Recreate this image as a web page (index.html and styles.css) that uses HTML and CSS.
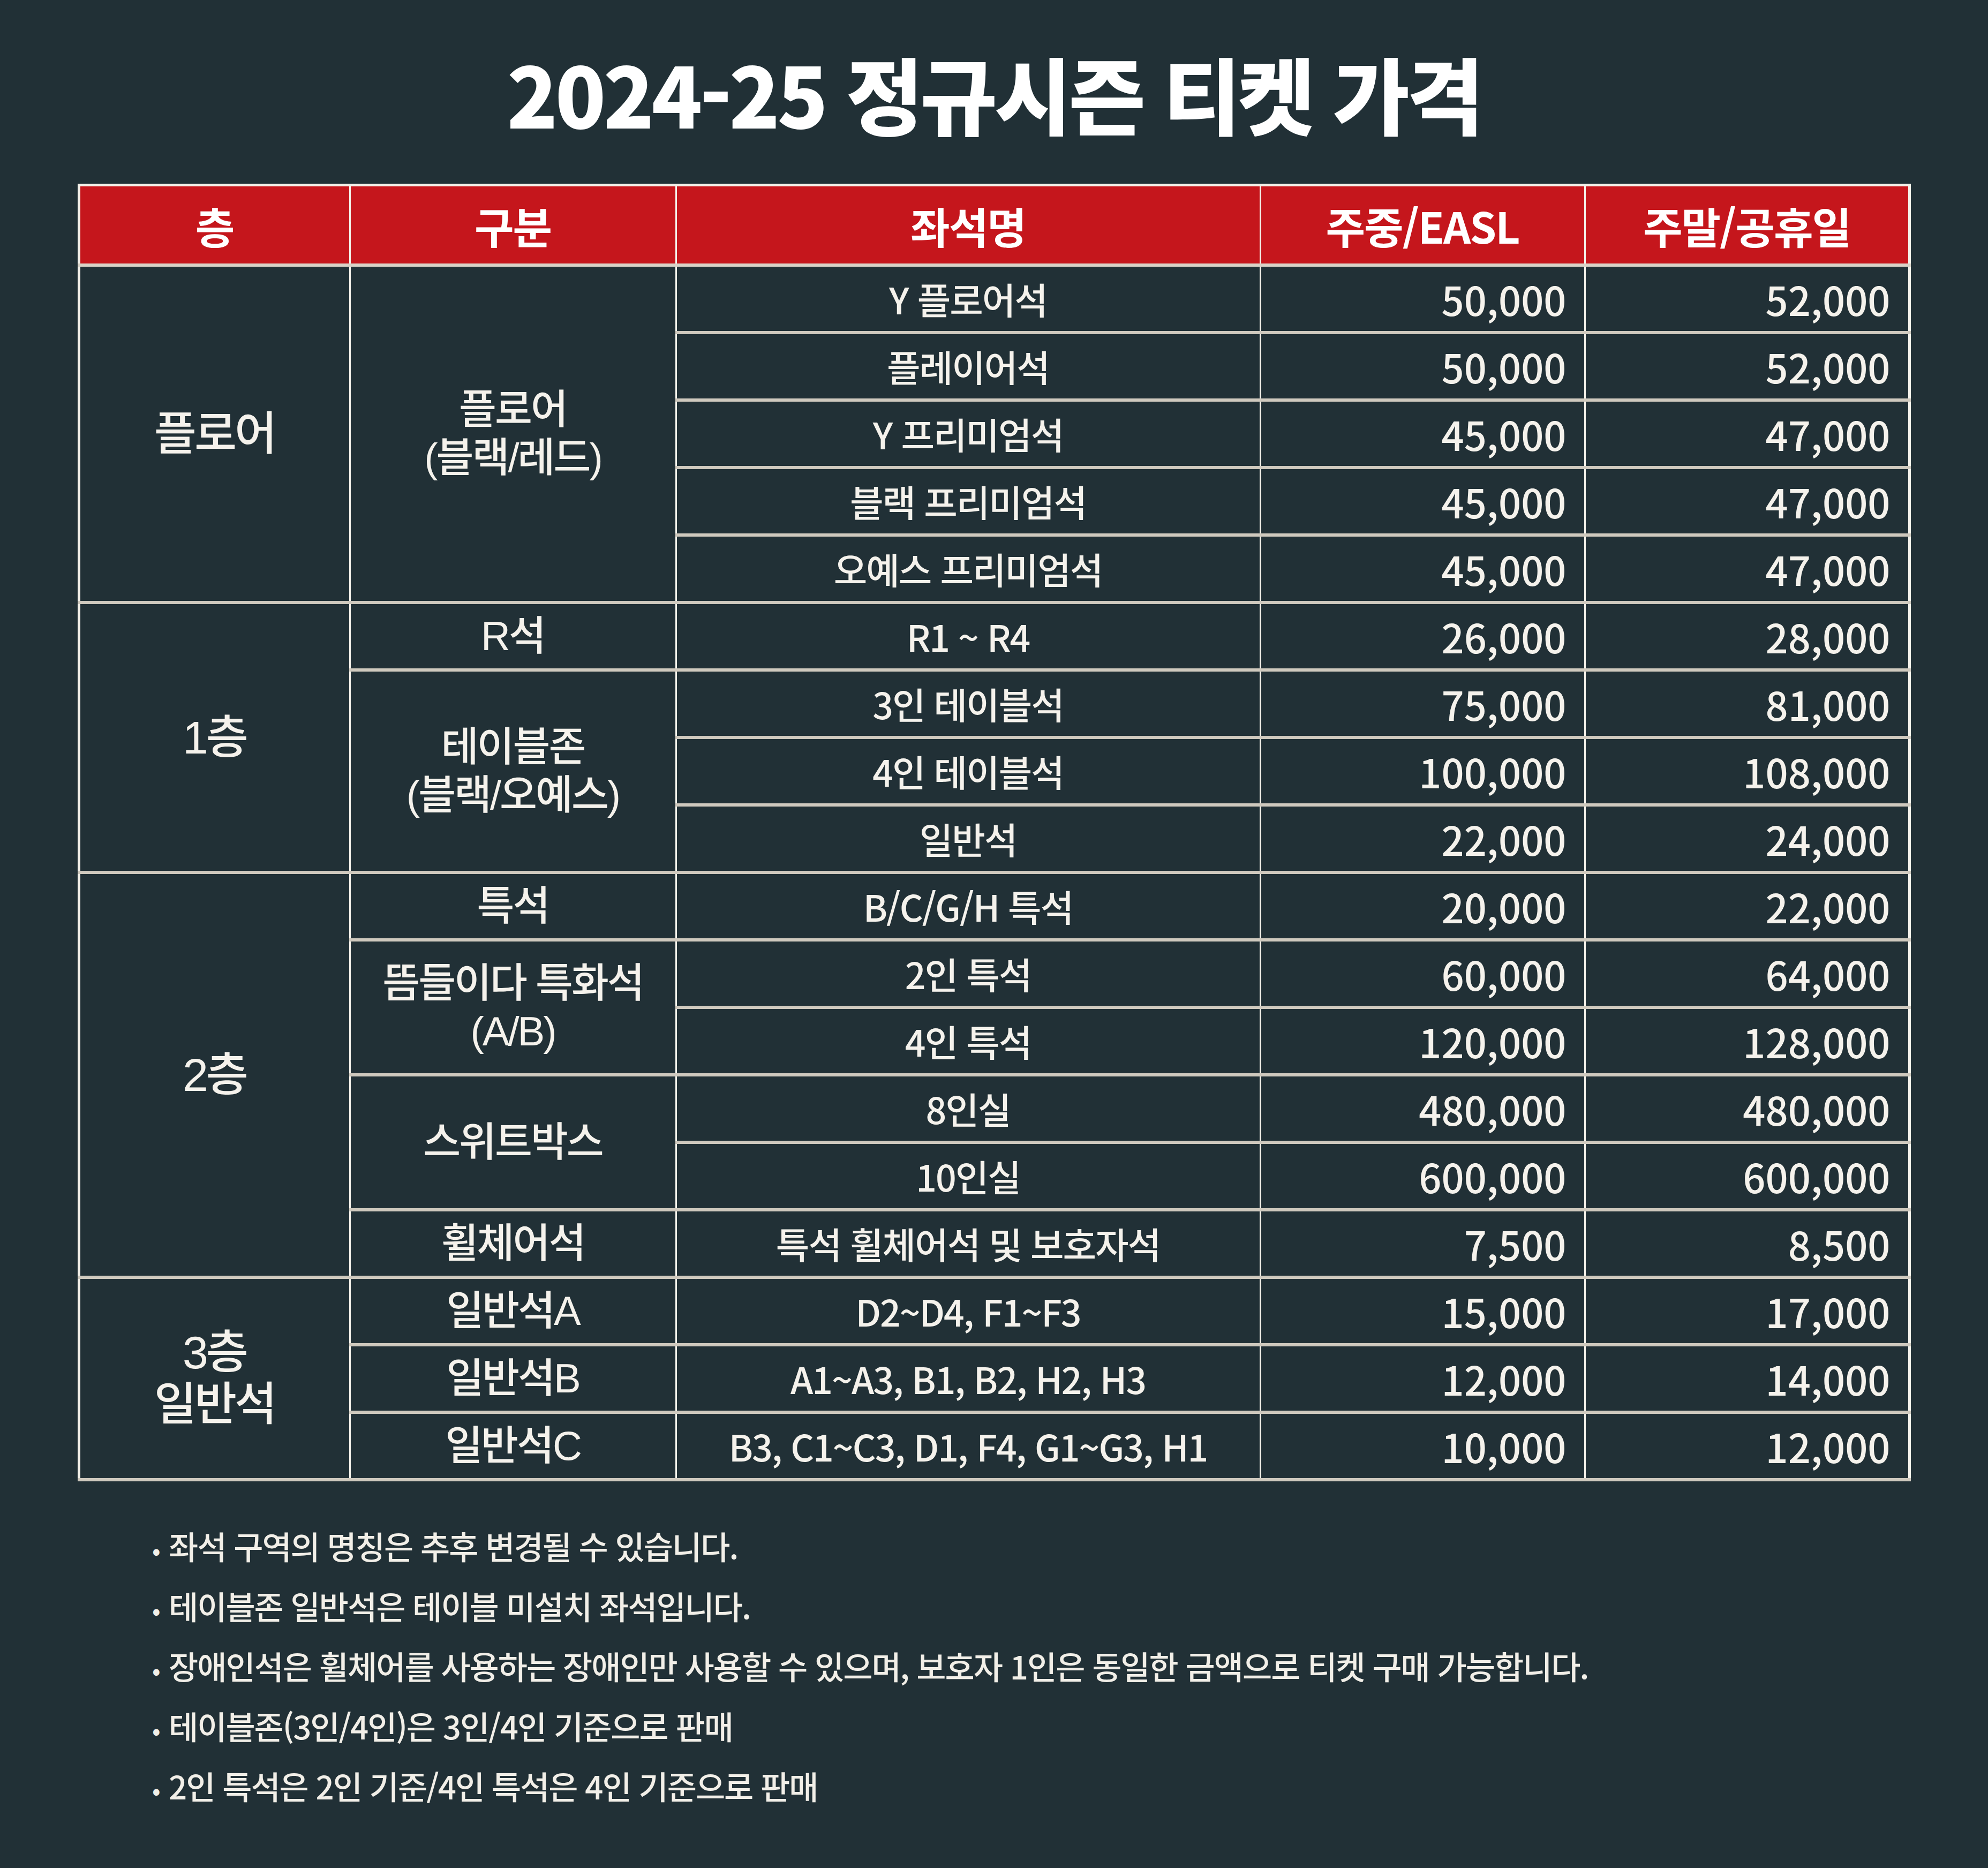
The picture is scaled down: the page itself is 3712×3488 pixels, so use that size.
FILE: index.html
```html
<!DOCTYPE html>
<html lang="ko">
<head>
<meta charset="utf-8">
<title>2024-25 정규시즌 티켓 가격</title>
<link rel="stylesheet" href="styles.css">
</head>
<body>
<div class="page">
  <h1 class="title">2024-25 정규시즌 티켓 가격</h1>
  <table class="price">
    <colgroup>
      <col class="c1"><col class="c2"><col class="c3"><col class="c4"><col class="c5">
    </colgroup>
    <thead>
      <tr><th>층</th><th>구분</th><th>좌석명</th><th>주중/EASL</th><th>주말/공휴일</th></tr>
    </thead>
    <tbody>
      <tr><td class="floor" rowspan="5">플로어</td><td class="grp" rowspan="5">플로어<br>(블랙/레드)</td><td class="seat">Y 플로어석</td><td class="num">50,000</td><td class="num">52,000</td></tr>
      <tr><td class="seat">플레이어석</td><td class="num">50,000</td><td class="num">52,000</td></tr>
      <tr><td class="seat">Y 프리미엄석</td><td class="num">45,000</td><td class="num">47,000</td></tr>
      <tr><td class="seat">블랙 프리미엄석</td><td class="num">45,000</td><td class="num">47,000</td></tr>
      <tr><td class="seat">오예스 프리미엄석</td><td class="num">45,000</td><td class="num">47,000</td></tr>
      <tr><td class="floor" rowspan="4">1층</td><td class="grp">R석</td><td class="seat">R1 ~ R4</td><td class="num">26,000</td><td class="num">28,000</td></tr>
      <tr><td class="grp" rowspan="3">테이블존<br>(블랙/오예스)</td><td class="seat">3인 테이블석</td><td class="num">75,000</td><td class="num">81,000</td></tr>
      <tr><td class="seat">4인 테이블석</td><td class="num">100,000</td><td class="num">108,000</td></tr>
      <tr><td class="seat">일반석</td><td class="num">22,000</td><td class="num">24,000</td></tr>
      <tr><td class="floor" rowspan="6">2층</td><td class="grp">특석</td><td class="seat">B/C/G/H 특석</td><td class="num">20,000</td><td class="num">22,000</td></tr>
      <tr><td class="grp" rowspan="2">뜸들이다 특화석<br>(A/B)</td><td class="seat">2인 특석</td><td class="num">60,000</td><td class="num">64,000</td></tr>
      <tr><td class="seat">4인 특석</td><td class="num">120,000</td><td class="num">128,000</td></tr>
      <tr><td class="grp" rowspan="2">스위트박스</td><td class="seat">8인실</td><td class="num">480,000</td><td class="num">480,000</td></tr>
      <tr><td class="seat">10인실</td><td class="num">600,000</td><td class="num">600,000</td></tr>
      <tr><td class="grp">휠체어석</td><td class="seat">특석 휠체어석 및 보호자석</td><td class="num">7,500</td><td class="num">8,500</td></tr>
      <tr><td class="floor" rowspan="3">3층<br>일반석</td><td class="grp">일반석A</td><td class="seat">D2~D4, F1~F3</td><td class="num">15,000</td><td class="num">17,000</td></tr>
      <tr><td class="grp">일반석B</td><td class="seat">A1~A3, B1, B2, H2, H3</td><td class="num">12,000</td><td class="num">14,000</td></tr>
      <tr><td class="grp">일반석C</td><td class="seat">B3, C1~C3, D1, F4, G1~G3, H1</td><td class="num">10,000</td><td class="num">12,000</td></tr>
    </tbody>
  </table>
  <ul class="notes">
    <li>좌석 구역의 명칭은 추후 변경될 수 있습니다.</li>
    <li>테이블존 일반석은 테이블 미설치 좌석입니다.</li>
    <li>장애인석은 휠체어를 사용하는 장애인만 사용할 수 있으며, 보호자 1인은 동일한 금액으로 티켓 구매 가능합니다.</li>
    <li>테이블존(3인/4인)은 3인/4인 기준으로 판매</li>
    <li>2인 특석은 2인 기준/4인 특석은 4인 기준으로 판매</li>
  </ul>
</div>
</body>
</html>
```

FILE: styles.css
```css
html, body {
  margin: 0;
  padding: 0;
  background: #213036;
}

.page {
  width: 3712px;
  height: 3488px;
  box-sizing: border-box;
  padding-top: 72px;
  font-family: "Noto Sans CJK KR", "Noto Sans", sans-serif;
  color: #f5f2ec;
}

.title {
  margin: 0;
  height: 200px;
  line-height: 200px;
  text-align: center;
  font-size: 156px;
  font-weight: 900;
  letter-spacing: -5px;
  color: #ffffff;
}

.price {
  margin: 71px auto 0;
  width: 3418px;
  table-layout: fixed;
  border-collapse: collapse;
  border: 5px solid #f4f1ea;
}

.c1 { width: 506px; }
.c2 { width: 609px; }
.c3 { width: 1091px; }
.c4 { width: 606px; }
.c5 { width: 606px; }

.price th {
  height: 144px;
  background: #c5161c;
  color: #ffffff;
  font-size: 80px;
  font-weight: 700;
  letter-spacing: -2px;
  padding: 0;
  border-left: 3px solid #f4f1ea;
  border-right: 3px solid #f4f1ea;
  border-bottom: 6px solid #d9d3c8;
}

.price td {
  height: 120px;
  padding: 0;
  text-align: center;
  vertical-align: middle;
  border-left: 3px solid #f4f1ea;
  border-right: 3px solid #f4f1ea;
  border-top: 6px solid #cfc9be;
  border-bottom: 6px solid #cfc9be;
  font-weight: 500;
  line-height: 1.2;
}

.price td.floor {
  font-family: "Liberation Sans", "Noto Sans CJK KR", sans-serif;
  font-size: 86px;
  letter-spacing: -4px;
  line-height: 97px;
}

.price td.grp {
  font-family: "Liberation Sans", "Noto Sans CJK KR", sans-serif;
  font-size: 76px;
  letter-spacing: -3px;
  line-height: 90px;
}

.price td.seat {
  font-size: 68px;
  letter-spacing: -2px;
}

.price td.num {
  font-size: 74px;
  text-align: right;
  padding-right: 33px;
}

.notes {
  list-style: none;
  margin: 64px 0 0;
  padding: 0 0 0 284px;
  font-size: 60px;
  font-weight: 500;
  letter-spacing: -2px;
  color: #f2efe8;
}

.notes li {
  height: 112px;
  line-height: 112px;
}

.notes li::before {
  content: "•";
  display: inline-block;
  width: 31px;
  letter-spacing: 0;
  font-size: 44px;
}
```
